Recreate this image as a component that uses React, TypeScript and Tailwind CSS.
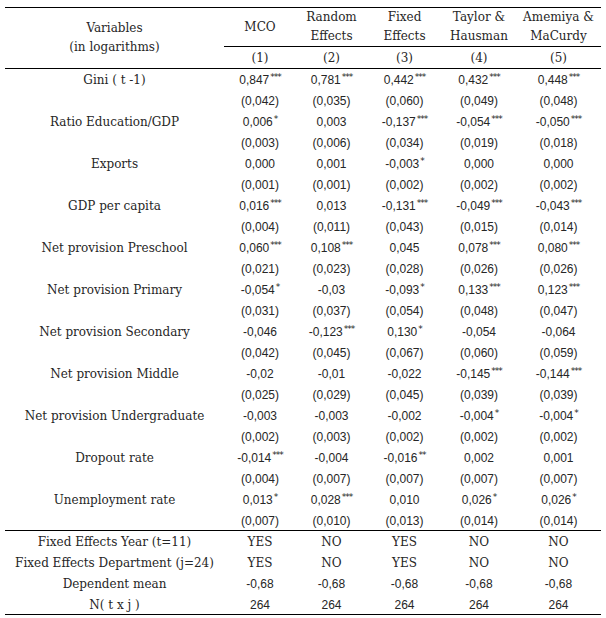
import React from "react";

type Cell = [string, string?];

interface Variable {
  name: string;
  coef: Cell[];
  se: string[];
}

const VARIABLES: Variable[] = [
  {
    name: "Gini ( t -1)",
    coef: [["0,847", "***"], ["0,781", "***"], ["0,442", "***"], ["0,432", "***"], ["0,448", "***"]],
    se: ["(0,042)", "(0,035)", "(0,060)", "(0,049)", "(0,048)"],
  },
  {
    name: "Ratio Education/GDP",
    coef: [["0,006", "*"], ["0,003"], ["-0,137", "***"], ["-0,054", "***"], ["-0,050", "***"]],
    se: ["(0,003)", "(0,006)", "(0,034)", "(0,019)", "(0,018)"],
  },
  {
    name: "Exports",
    coef: [["0,000"], ["0,001"], ["-0,003", "*"], ["0,000"], ["0,000"]],
    se: ["(0,001)", "(0,001)", "(0,002)", "(0,002)", "(0,002)"],
  },
  {
    name: "GDP per capita",
    coef: [["0,016", "***"], ["0,013"], ["-0,131", "***"], ["-0,049", "***"], ["-0,043", "***"]],
    se: ["(0,004)", "(0,011)", "(0,043)", "(0,015)", "(0,014)"],
  },
  {
    name: "Net provision Preschool",
    coef: [["0,060", "***"], ["0,108", "***"], ["0,045"], ["0,078", "***"], ["0,080", "***"]],
    se: ["(0,021)", "(0,023)", "(0,028)", "(0,026)", "(0,026)"],
  },
  {
    name: "Net provision Primary",
    coef: [["-0,054", "*"], ["-0,03"], ["-0,093", "*"], ["0,133", "***"], ["0,123", "***"]],
    se: ["(0,031)", "(0,037)", "(0,054)", "(0,048)", "(0,047)"],
  },
  {
    name: "Net provision Secondary",
    coef: [["-0,046"], ["-0,123", "***"], ["0,130", "*"], ["-0,054"], ["-0,064"]],
    se: ["(0,042)", "(0,045)", "(0,067)", "(0,060)", "(0,059)"],
  },
  {
    name: "Net provision Middle",
    coef: [["-0,02"], ["-0,01"], ["-0,022"], ["-0,145", "***"], ["-0,144", "***"]],
    se: ["(0,025)", "(0,029)", "(0,045)", "(0,039)", "(0,039)"],
  },
  {
    name: "Net provision Undergraduate",
    coef: [["-0,003"], ["-0,003"], ["-0,002"], ["-0,004", "*"], ["-0,004", "*"]],
    se: ["(0,002)", "(0,003)", "(0,002)", "(0,002)", "(0,002)"],
  },
  {
    name: "Dropout rate",
    coef: [["-0,014", "***"], ["-0,004"], ["-0,016", "**"], ["0,002"], ["0,001"]],
    se: ["(0,004)", "(0,007)", "(0,007)", "(0,007)", "(0,007)"],
  },
  {
    name: "Unemployment rate",
    coef: [["0,013", "*"], ["0,028", "***"], ["0,010"], ["0,026", "*"], ["0,026", "*"]],
    se: ["(0,007)", "(0,010)", "(0,013)", "(0,014)", "(0,014)"],
  },
];

const FOOTER: [string, string[]][] = [
  ["Fixed Effects Year (t=11)", ["YES", "NO", "YES", "NO", "NO"]],
  ["Fixed Effects Department (j=24)", ["YES", "NO", "YES", "NO", "NO"]],
  ["Dependent mean", ["-0,68", "-0,68", "-0,68", "-0,68", "-0,68"]],
  ["N( t x j )", ["264", "264", "264", "264", "264"]],
];

const serif = "font-['DejaVu_Serif',serif]";
const sans = "font-['Liberation_Sans',Arial,sans-serif]";

function Num({ value, stars }: { value: string; stars?: string }) {
  return (
    <span className={sans}>
      {value}
      {stars && (
        <span className="inline-block align-top text-[9px] leading-[9px] ml-px -mt-[1px] font-['DejaVu_Sans',sans-serif] tracking-[-1px]">
          {stars}
        </span>
      )}
    </span>
  );
}

export default function App() {
  return (
    <div className="w-[606px] h-[618px] bg-white pt-[7px] pl-[5px] text-[#262626]">
      <table className="table-fixed border-collapse w-[596px] text-[12px] leading-none">
        <colgroup>
          <col className="w-[219px]" />
          <col className="w-[72px]" />
          <col className="w-[71px]" />
          <col className="w-[75px]" />
          <col className="w-[74px]" />
          <col className="w-[85px]" />
        </colgroup>
        <thead>
          <tr className="h-[39px] border-t border-black">
            <th rowSpan={2} className={`${serif} font-normal text-center leading-[19px] border-b border-black`}>
              Variables
              <br />
              (in logarithms)
            </th>
            <th className={`${serif} font-normal text-center leading-[19px] align-middle`}>MCO</th>
            {[
              ["Random", "Effects"],
              ["Fixed", "Effects"],
              ["Taylor &", "Hausman"],
              ["Amemiya &", "MaCurdy"],
            ].map(([a, b]) => (
              <th key={a} className={`${serif} font-normal text-center leading-[19px]`}>
                {a}
                <br />
                {b}
              </th>
            ))}
          </tr>
          <tr className="h-[22px] border-b border-black">
            {[1, 2, 3, 4, 5].map((n) => (
              <th key={n} className={`${serif} font-normal text-center border-t border-black`}>
                ({n})
              </th>
            ))}
          </tr>
        </thead>
        <tbody>
          {VARIABLES.map((v) => (
            <React.Fragment key={v.name}>
              <tr className="h-[21px]">
                <td className={`${serif} text-center pt-[2px]`}>{v.name}</td>
                {v.coef.map(([val, st], i) => (
                  <td key={i} className="text-center pt-[2px]">
                    <Num value={val} stars={st} />
                  </td>
                ))}
              </tr>
              <tr className="h-[21px]">
                <td />
                {v.se.map((s, i) => (
                  <td key={i} className="text-center pt-[2px]">
                    <Num value={s} />
                  </td>
                ))}
              </tr>
            </React.Fragment>
          ))}
          {FOOTER.map(([label, vals], r) => (
            <tr key={label} className={`h-[21px] ${r === 0 ? "border-t border-black" : ""} ${r === FOOTER.length - 1 ? "border-b border-black" : ""}`}>
              <td className={`${serif} text-center pt-[2px]`}>{label}</td>
              {vals.map((v, i) => (
                <td key={i} className={`text-center pt-[2px] ${v === "YES" || v === "NO" ? serif : sans}`}>
                  {v}
                </td>
              ))}
            </tr>
          ))}
        </tbody>
      </table>
    </div>
  );
}
